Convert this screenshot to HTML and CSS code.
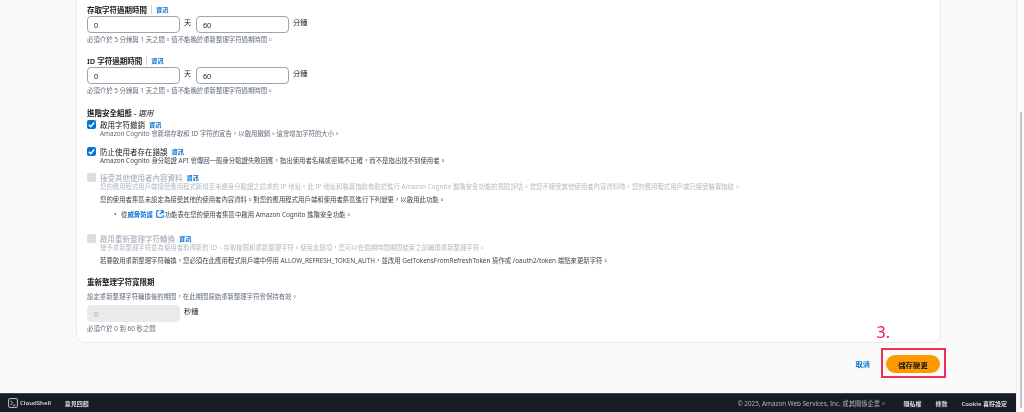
FILE: index.html
```html
<!DOCTYPE html>
<html lang="zh-Hant">
<head>
    <meta charset="utf-8">
    <title>編輯應用程式用戶端</title>
    <link rel="stylesheet" href="styles.css">
</head>
<body>
<div class="app">
    <div class="window">
        <main class="page">
            <section class="card">
                <div class="field first">
                    <div class="label">存取字符過期時間<a class="info">資訊</a></div>
                    <div class="duration">
                        <input class="box" value="0"><span class="unit">天</span>
                        <input class="box" value="60"><span class="unit">分鐘</span>
                    </div>
                    <div class="hint">必須介於 5 分鐘與 1 天之間。值不能晚於重新整理字符過期時間。</div>
                </div>

                <div class="field second">
                    <div class="label">ID 字符過期時間<a class="info">資訊</a></div>
                    <div class="duration">
                        <input class="box" value="0"><span class="unit">天</span>
                        <input class="box" value="60"><span class="unit">分鐘</span>
                    </div>
                    <div class="hint">必須介於 5 分鐘與 1 天之間。值不能晚於重新整理字符過期時間。</div>
                </div>

                <h3 class="heading">進階安全組態 - <em>選用</em></h3>

                <div class="option on">
                    <span class="check"><svg viewBox="0 0 10 10"><path d="M2 5.2 4.2 7.4 8 2.8" fill="none" stroke="#fff" stroke-width="1.6"/></svg></span>
                    <div class="option-body">
                        <div class="option-title">啟用字符撤銷<a class="info plain">資訊</a></div>
                        <div class="desc">Amazon Cognito 會新增存取和 ID 字符的宣告，以啟用撤銷。這會增加字符的大小。</div>
                    </div>
                </div>

                <div class="option on gap-a">
                    <span class="check"><svg viewBox="0 0 10 10"><path d="M2 5.2 4.2 7.4 8 2.8" fill="none" stroke="#fff" stroke-width="1.6"/></svg></span>
                    <div class="option-body">
                        <div class="option-title">防止使用者存在錯誤<a class="info plain">資訊</a></div>
                        <div class="desc dark">Amazon Cognito 身分驗證 API 會傳回一般身分驗證失敗回應，指出使用者名稱或密碼不正確，而不是指出找不到使用者。</div>
                    </div>
                </div>

                <div class="option off gap-b">
                    <span class="check"></span>
                    <div class="option-body">
                        <div class="option-title">接受其他使用者內容資料<a class="info plain">資訊</a></div>
                        <div class="desc">您的應用程式用戶端接受應用程式新增至未經身分驗證之請求的 IP 地址。此 IP 地址和裝置指紋有助於進行 Amazon Cognito 進階安全功能的風險評估。當您不接受其他使用者內容資料時，您的應用程式用戶端只接受裝置指紋。</div>
                        <div class="note">您的使用者集區未設定為接受其他的使用者內容資料。對您的應用程式用戶端和使用者集區進行下列變更，以啟用此功能。</div>
                        <ul class="steps">
                            <li>從<a class="info link">威脅防護</a>
                                <svg class="ext" viewBox="0 0 10 10"><path d="M4 1H1v8h8V6M5.6 1H9v3.4M8.8 1.2 4.6 5.4" fill="none" stroke="#0972d3" stroke-width="1.4"/></svg>功能表在您的使用者集區中啟用 Amazon Cognito 進階安全功能。</li>
                        </ul>
                    </div>
                </div>

                <div class="option off gap-c">
                    <span class="check"></span>
                    <div class="option-body">
                        <div class="option-title">啟用重新整理字符輪換<a class="info plain">資訊</a></div>
                        <div class="desc">授予重新整理字符並為使用者取得新的 ID、存取權限和重新整理字符。使用此選項，您可以在過期時間期間結束之前輪換重新整理字符。</div>
                        <div class="note">若要啟用重新整理字符輪換，您必須在此應用程式用戶端中停用 ALLOW_REFRESH_TOKEN_AUTH，並改用 GetTokensFromRefreshToken 操作或 /oauth2/token 端點來更新字符。</div>
                    </div>
                </div>

                <div class="field grace">
                    <div class="label">重新整理字符寬限期</div>
                    <div class="hint lead">設定重新整理字符輪換後的期間，在此期間原始重新整理字符會保持有效。</div>
                    <div class="duration tight">
                        <input class="box disabled" value="0" disabled><span class="unit">秒鐘</span>
                    </div>
                    <div class="hint">必須介於 0 到 60 秒之間</div>
                </div>
            </section>

            <div class="actions">
                <a class="cancel">取消</a>
                <button class="save" type="button">儲存變更</button>
                <span class="marker">3.</span>
                <span class="marker-box"></span>
            </div>
        </main>

        <footer class="footer">
            <div class="footer-left">
                <svg class="shell" viewBox="0 0 10 10"><rect x=".6" y=".6" width="8.8" height="8.8" rx="1" fill="none" stroke="#d5dbdb" stroke-width=".9"/><path d="M2.6 2.8 4.6 4.8 2.6 6.8M4.8 7.2H7.4" fill="none" stroke="#d5dbdb" stroke-width=".9"/></svg>
                <span class="strong">CloudShell</span>
                <span class="feedback strong">意見回饋</span>
            </div>
            <div class="footer-right">
                <span class="copy">© 2025, Amazon Web Services, Inc. 或其關係企業。</span>
                <span class="strong">隱私權</span>
                <span class="strong">條款</span>
                <span class="strong">Cookie 喜好設定</span>
            </div>
        </footer>
    </div>
    <div class="scrollbar"><div class="thumb"></div></div>
</div>
</body>
</html>
```

FILE: styles.css
```css
* {
    box-sizing: border-box;
}

html, body {
    margin: 0;
    height: 100%;
    overflow: hidden;
}

body {
    font-family: "Noto Sans", "Noto Sans CJK TC", sans-serif;
    color: #16191f;
    background: #fafafa;
    filter: blur(0.3px);
}

.app {
    display: flex;
    height: 412px;
}

.window {
    flex: 1;
    display: flex;
    flex-direction: column;
    min-width: 0;
}

.page {
    flex: 1;
    padding: 0 75px 0 76px;
    background: #fafafa;
}

.card {
    height: 343px;
    padding: 0 10px;
    background: #fff;
    border: 1px solid #e9ebed;
    border-top: 0;
    border-radius: 0 0 9px 9px;
}

.label {
    display: flex;
    align-items: center;
    height: 10px;
    font-size: 7.5px;
    font-weight: 600;
}

.info {
    color: #0972d3;
    font-size: 6.2px;
    font-weight: 600;
}

.label .info {
    margin-left: 4px;
    padding-left: 4px;
    border-left: 1px solid #d1d5db;
}

.first {
    padding-top: 4px;
}

.second {
    margin-top: 11px;
}

.duration {
    display: flex;
    align-items: flex-start;
    margin-top: 2px;
}

.duration.tight {
    margin-top: 4px;
}

.box {
    width: 93px;
    height: 17px;
    padding: 0 6px;
    font: inherit;
    font-size: 7.2px;
    color: #16191f;
    background: #fff;
    border: 1px solid #a0a4aa;
    border-radius: 4px;
}

.box.disabled {
    color: #9ba7b6;
    background: #e9ebed;
    border-color: #e9ebed;
}

.unit {
    padding: 0 3px 0 4px;
    font-size: 7.2px;
    line-height: 13px;
    white-space: nowrap;
}

.unit:nth-child(2) {
    width: 16px;
}

.hint {
    margin-top: 2px;
    font-size: 6.4px;
    line-height: 9px;
    color: #5f6b7a;
}

.heading {
    margin: 13px 0 1px;
    font-size: 7.5px;
    line-height: 10px;
    font-weight: 600;
}

.heading em {
    font-weight: 400;
}

.option {
    display: flex;
    gap: 4px;
}

.check {
    flex: none;
    width: 9px;
    height: 9px;
    margin-top: 1px;
    border-radius: 2px;
    background: #0972d3;
}

.check svg {
    display: block;
}

.off .check {
    background: #dcdde2;
}

.option-body {
    min-width: 0;
}

.option-title {
    display: flex;
    align-items: center;
    height: 10px;
    font-size: 7.5px;
}

.off .option-title {
    color: #9ba7b6;
}

.info.plain {
    margin-left: 4px;
}

.desc {
    font-size: 6.4px;
    line-height: 9px;
    color: #5f6b7a;
    white-space: nowrap;
}

.desc.dark {
    color: #414750;
}

.off .desc {
    color: #b4b9c0;
}

.note {
    margin-top: 4px;
    font-size: 6.4px;
    line-height: 9px;
    color: #414750;
    white-space: nowrap;
}

.steps {
    margin: 6px 0 0;
    padding-left: 14px;
    list-style: none;
    font-size: 6.4px;
    line-height: 9px;
    color: #414750;
}

.steps li::before {
    content: "•";
    display: inline-block;
    width: 7px;
}

.steps .info {
    font-size: 6.4px;
}

.ext {
    width: 8px;
    height: 8px;
    margin: 0 1px 0 1px;
    vertical-align: -1px;
}

.gap-a {
    margin-top: 8px;
}

.gap-b {
    margin-top: 7px;
}

.gap-c {
    margin-top: 14px;
}

.grace {
    margin-top: 11px;
}

.lead {
    margin-top: 6px;
}

.actions {
    position: relative;
    display: flex;
    justify-content: flex-end;
    align-items: center;
    gap: 16px;
    height: 18px;
    margin-top: 12px;
    padding-right: 1px;
}

.cancel {
    color: #0972d3;
    font-size: 7.2px;
    font-weight: 600;
}

.save {
    width: 54px;
    height: 18px;
    padding: 0;
    border: 0;
    border-radius: 9px;
    background: #ff9900;
    color: #16191f;
    font: inherit;
    font-size: 7.4px;
    font-weight: 600;
}

.marker {
    position: absolute;
    right: 51px;
    top: -32px;
    font-size: 16px;
    line-height: 18px;
    color: #e8174a;
}

.marker-box {
    position: absolute;
    right: -5px;
    top: -7px;
    width: 65px;
    height: 30px;
    border: 2px solid #ee2f5a;
}

.footer {
    display: flex;
    justify-content: space-between;
    align-items: center;
    height: 19px;
    padding: 0 9px 0 8px;
    background: #161d26;
    border-top: 1px solid #414750;
    color: #d5dbdb;
    font-size: 6px;
    white-space: nowrap;
}

.footer-left, .footer-right {
    display: flex;
    align-items: center;
}

.strong {
    font-weight: 600;
}

.shell {
    width: 10px;
    height: 10px;
    margin-right: 2px;
}

.feedback {
    margin-left: 14px;
}

.footer-right {
    gap: 14px;
}

.copy {
    margin-right: 3px;
    font-size: 6.3px;
    color: #aab7b8;
}

.scrollbar {
    flex: none;
    width: 8px;
    padding: 112px 2px 4px;
    background: #fafafa;
    border-left: 1px solid #ececec;
}

.thumb {
    height: 100%;
    margin-left: 1px;
    background: #c2c2c2;
    border-radius: 2px;
}
```
